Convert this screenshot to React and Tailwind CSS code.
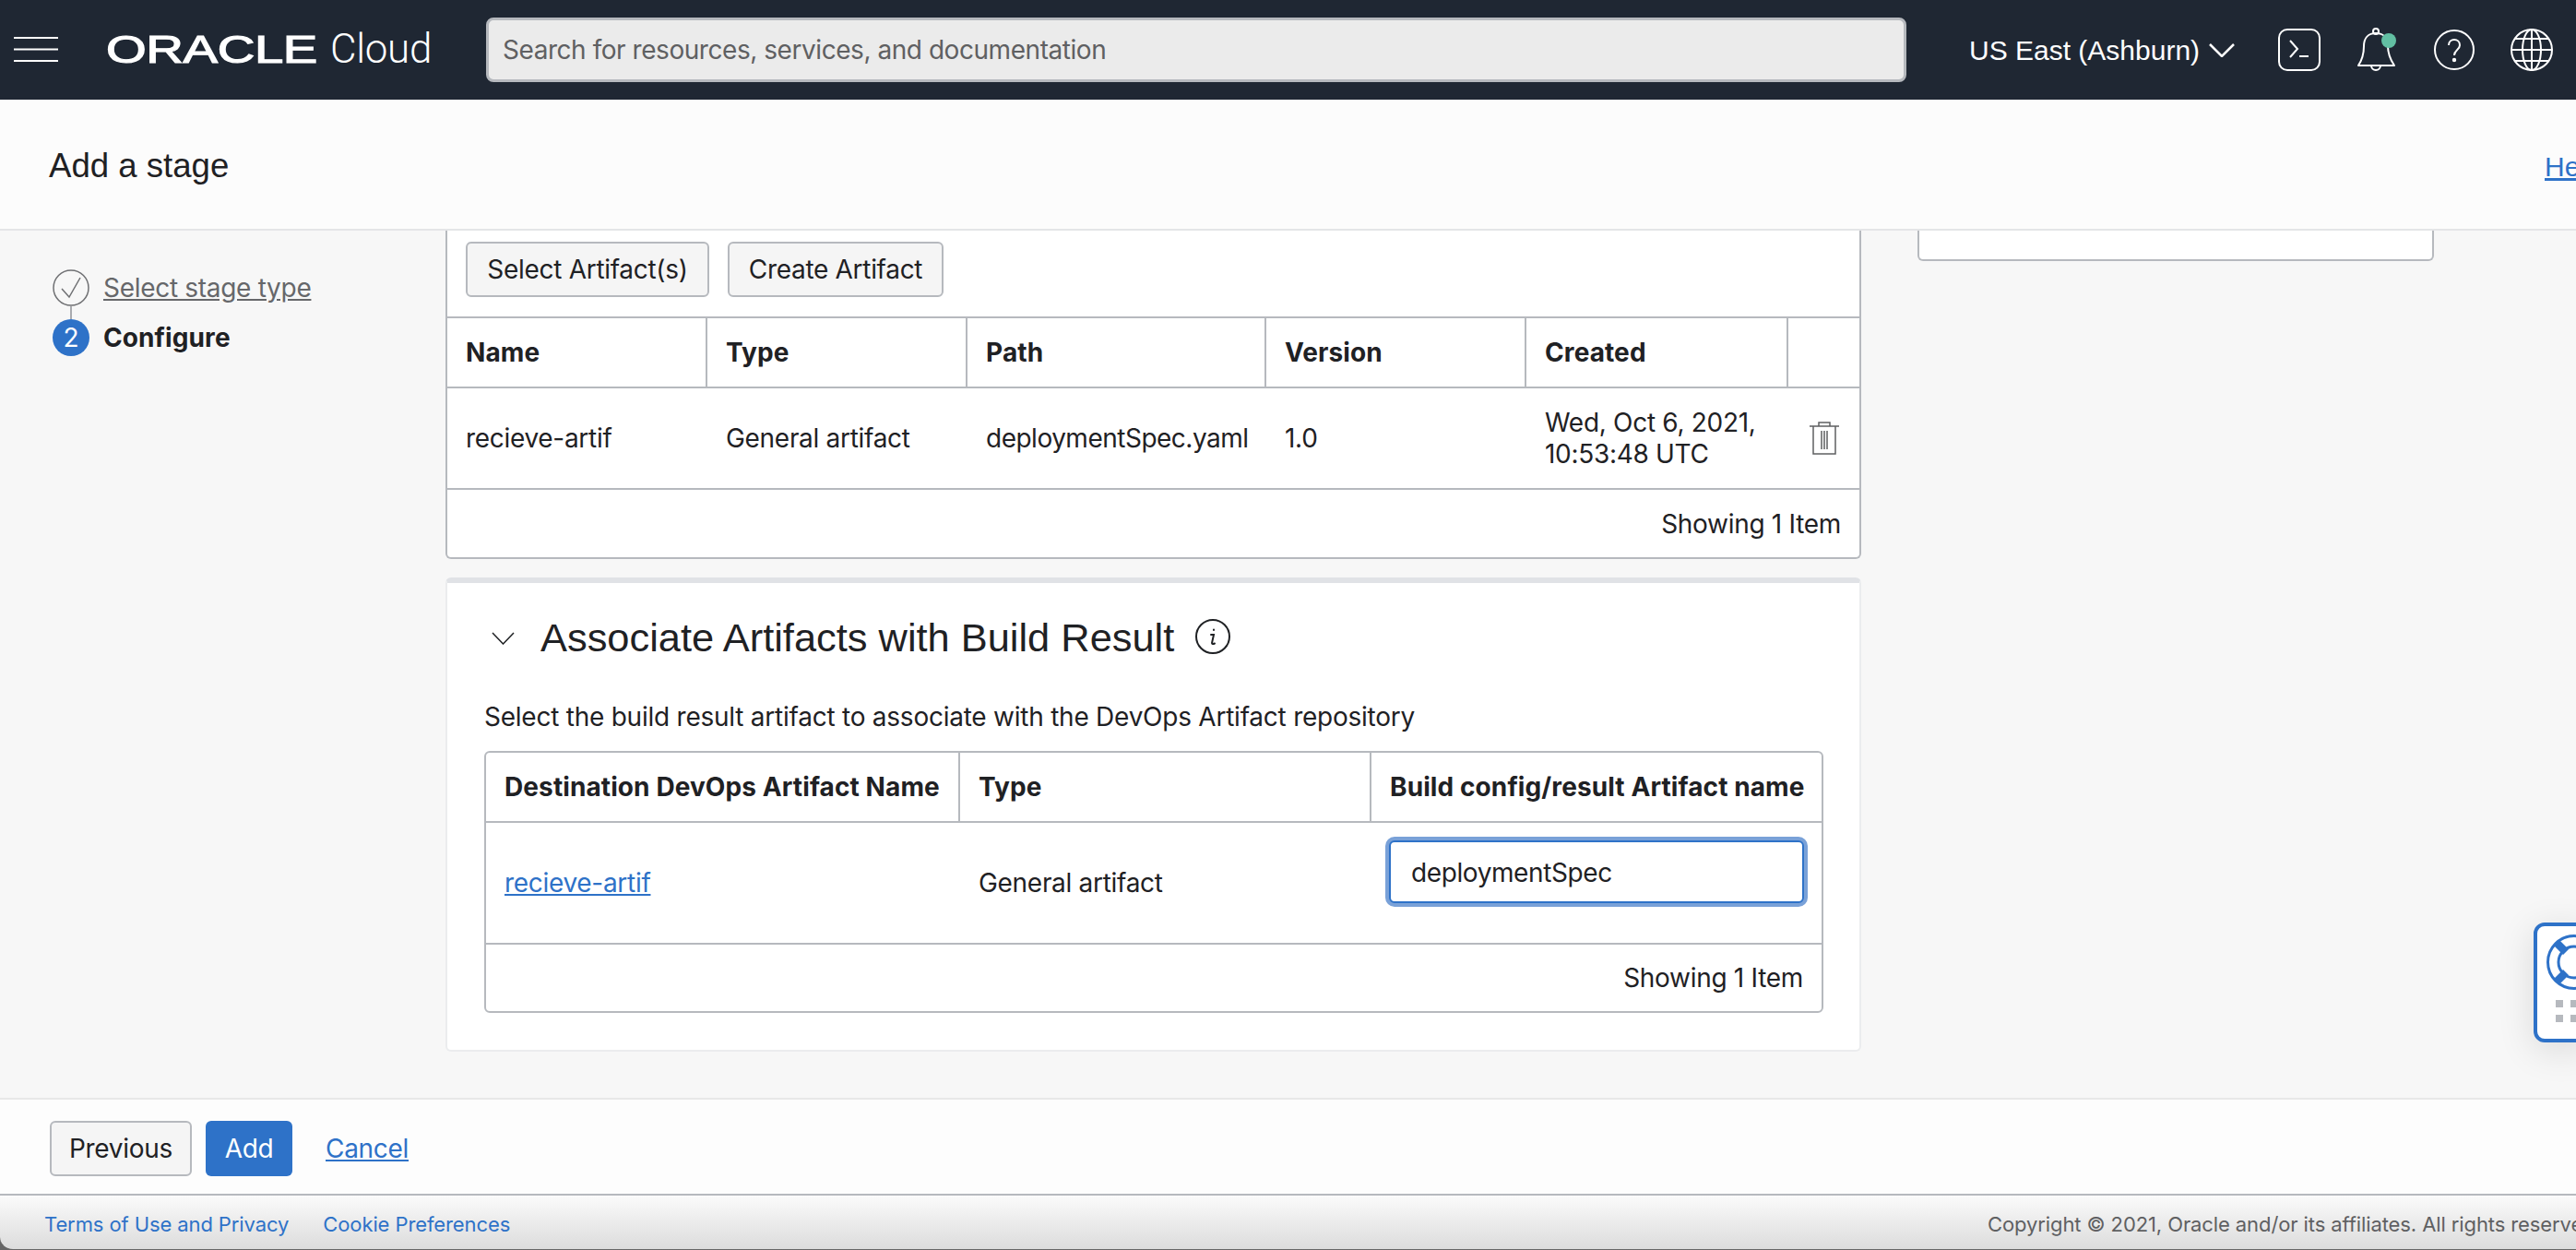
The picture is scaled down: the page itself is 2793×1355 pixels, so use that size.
import React from 'react'

const Hamburger = () => (
  <svg width="48" height="28" viewBox="0 0 48 28" fill="none" stroke="#fff" strokeWidth="2">
    <path d="M0 1h48M0 13.5h48M0 26h48" />
  </svg>
)

const Logo = () => (
  <svg width="354" height="40" viewBox="0 0 354 40" className="block overflow-visible">
    <text x="0" y="34" fontFamily="'Liberation Sans', sans-serif" fontSize="42" fill="#fff" stroke="#fff" strokeWidth="1.2" textLength="229" lengthAdjust="spacingAndGlyphs">ORACLE</text>
    <text x="243" y="34" fontFamily="Roboto, sans-serif" fontSize="44" fontWeight="300" fill="#fff" textLength="110" lengthAdjust="spacingAndGlyphs">Cloud</text>
  </svg>
)

const TerminalIcon = () => (
  <svg width="46" height="46" viewBox="0 0 46 46" fill="none" stroke="#fff" strokeWidth="2">
    <rect x="1" y="1" width="44" height="44" rx="9" />
    <path d="M13 13l8 9-8 9M23 30h10" />
  </svg>
)

const BellIcon = () => (
  <svg width="44" height="48" viewBox="0 0 44 48" fill="none" className="overflow-visible">
    <path d="M1 41c4-6 6-13 6-21 0-9 5-14 13-14s13 5 13 14c0 8 3 15 7 21z" stroke="#fff" strokeWidth="2" strokeLinejoin="round" />
    <circle cx="20" cy="4" r="3" stroke="#fff" strokeWidth="2" />
    <path d="M15 41a5 5 0 0 0 10 0" stroke="#fff" strokeWidth="2" />
    <ellipse cx="34" cy="14" rx="8" ry="8" fill="#62bfa3" />
  </svg>
)

const HelpIcon = () => (
  <svg width="44" height="44" viewBox="0 0 44 44" fill="none" stroke="#fff" strokeWidth="2">
    <circle cx="22" cy="22" r="21" />
    <path d="M16 17c0-4 3-6 6-6s6 2 6 6c0 5-6 5-6 11" />
    <circle cx="22" cy="33" r="1.2" fill="#fff" />
  </svg>
)

const GlobeIcon = () => (
  <svg width="46" height="46" viewBox="0 0 46 46" fill="none" stroke="#fff" strokeWidth="2">
    <circle cx="23" cy="23" r="22" />
    <ellipse cx="23" cy="23" rx="10" ry="22" />
    <path d="M23 1v44M1 23h44M5 11h36M5 35h36" />
  </svg>
)

const Chevron = ({ w, h, color, sw }) => (
  <svg width={w} height={h} viewBox={`0 0 ${w} ${h}`} fill="none" stroke={color} strokeWidth={sw}>
    <path d={`M1 1L${w / 2} ${h - 1}L${w - 1} 1`} />
  </svg>
)

const TrashIcon = () => (
  <svg width="32" height="36" viewBox="0 0 32 36" fill="none" stroke="#5f6062" strokeWidth="1.5">
    <path d="M0 5h32M10 5V1h12v4M4 5v30h24V5M13 10v20M16 10v20M19 10v20" />
  </svg>
)

const InfoIcon = () => (
  <svg width="38" height="38" viewBox="0 0 38 38" fill="none" stroke="#1f2124" strokeWidth="2">
    <circle cx="19" cy="19" r="18" />
    <path d="M20 11.5v.5M17 17h3l-2 9c0 1 1 1.5 3 .5" strokeLinecap="round" />
  </svg>
)

const CheckCircle = () => (
  <svg width="40" height="40" viewBox="0 0 40 40" fill="none" stroke="#6f7073" strokeWidth="1.5">
    <circle cx="20" cy="20" r="19" />
    <path d="M10 21l8 9 12-21" />
  </svg>
)

const Lifebuoy = () => (
  <svg width="60" height="60" viewBox="0 0 60 60" fill="none">
    <circle cx="30" cy="30" r="28.5" stroke="#2e72c8" strokeWidth="3" />
    <circle cx="30" cy="30" r="17" stroke="#2e72c8" strokeWidth="3" />
    <path d="M8 12l10 10 6-6L14 6zM8 48l10-10 6 6-10 10z" fill="#2e72c8" />
  </svg>
)

const cell = 'flex items-center px-5 border-[#b6b9be] whitespace-nowrap'

const App = () => {
  return (
    <div className="w-full h-[1355px] flex flex-col overflow-hidden bg-[#666] text-[#1f2124] font-['Inter',sans-serif] text-[28px] tracking-[-0.3px]">
      <header className="h-[108px] shrink-0 bg-[#1f2733] flex items-center">
        <div className="ml-[15px] mr-[52px]"><Hamburger /></div>
        <Logo />
        <div className="ml-[58px] w-[1540px] h-[70px] bg-[#ebebeb] border-[3px] border-[#b6b9be] rounded-lg flex items-center pl-[15px] text-[#5f6062] tracking-[-0.45px]">
          Search for resources, services, and documentation
        </div>
        <div className="ml-[68px] flex items-center text-white font-['Liberation_Sans',sans-serif] text-[30px] tracking-normal">
          US East (Ashburn)
          <span className="ml-[10px]"><Chevron w={28} h={15} color="#fff" sw={2.5} /></span>
        </div>
        <div className="ml-[47px]"><TerminalIcon /></div>
        <div className="ml-[40px]"><BellIcon /></div>
        <div className="ml-[39px]"><HelpIcon /></div>
        <div className="ml-[39px]"><GlobeIcon /></div>
      </header>

      <div className="h-[142px] shrink-0 bg-[#fcfcfc] border-b-2 border-[#e4e5e7] flex items-center justify-between pl-[53px] pt-[4px] font-['Liberation_Sans',sans-serif] tracking-normal">
        <h1 className="text-[36.6px]">Add a stage</h1>
        <a className="text-[#2e72c8] underline text-[30px] w-[34px] overflow-hidden">Help</a>
      </div>

      <div className="flex-1 min-h-0 flex bg-[#f7f7f7] overflow-hidden">
        <aside className="w-[483px] shrink-0 pt-[42px] pl-[57px]">
          <div className="flex items-center gap-[15px] h-[40px]">
            <CheckCircle />
            <a className="text-[#66676a] underline">Select stage type</a>
          </div>
          <div className="w-[2px] h-[14px] ml-[19px] bg-[#a9abaf]"></div>
          <div className="flex items-center gap-[15px] h-[40px]">
            <div className="w-[40px] h-[40px] rounded-full bg-[#2e72c8] text-white flex items-center justify-center">2</div>
            <span className="font-bold tracking-[0.1px]">Configure</span>
          </div>
        </aside>

        <main className="w-[1535px] shrink-0">
          <section className="h-[356px] bg-white border-x-2 border-b-2 border-[#b6b9be] rounded-b-md flex flex-col">
            <div className="h-[93px] shrink-0 pl-[20px] pt-[12px] flex items-start gap-[20px]">
              <button className="h-[60px] w-[264px] bg-[#f5f5f5] border-2 border-[#b6b9be] rounded-md">Select Artifact(s)</button>
              <button className="h-[60px] w-[234px] bg-[#f5f5f5] border-2 border-[#b6b9be] rounded-md">Create Artifact</button>
            </div>
            <div className="h-[78px] shrink-0 grid grid-cols-[282px_282px_324px_282px_284px_77px] border-y-2 border-[#b6b9be] font-bold tracking-[0.1px]">
              <div className={`${cell} border-r-2`}>Name</div>
              <div className={`${cell} border-r-2`}>Type</div>
              <div className={`${cell} border-r-2`}>Path</div>
              <div className={`${cell} border-r-2`}>Version</div>
              <div className={`${cell} border-r-2`}>Created</div>
              <div></div>
            </div>
            <div className="h-[110px] shrink-0 grid grid-cols-[282px_282px_324px_282px_284px_77px] border-b-2 border-[#b6b9be]">
              <div className={cell}>recieve-artif</div>
              <div className={cell}>General artifact</div>
              <div className={`${cell} tracking-[-0.5px]`}>deploymentSpec.yaml</div>
              <div className={cell}>1.0</div>
              <div className="flex items-center px-5 leading-[34px]">Wed, Oct 6, 2021, 10:53:48 UTC</div>
              <div className="flex items-center justify-center"><TrashIcon /></div>
            </div>
            <div className="flex-1 flex items-center justify-end pr-[20px]">Showing 1 Item</div>
          </section>

          <section className="mt-[20px] h-[514px] bg-white border-t-[6px] border-x-2 border-b-2 border-t-[#e0e2e6] border-x-[#ebecee] border-b-[#ebecee] rounded-md pl-[40px]">
            <div className="h-[128px] flex items-start pt-[35px]">
              <span className="ml-[8px] mt-[18px]"><Chevron w={25} h={14} color="#1f2124" sw={1.5} /></span>
              <h2 className="ml-[28px] font-['Liberation_Sans',sans-serif] text-[43.4px] leading-[48px] tracking-normal">Associate Artifacts with Build Result</h2>
              <span className="ml-[23px] mt-[4px]"><InfoIcon /></span>
            </div>
            <p className="leading-[34px] tracking-[-0.24px]">Select the build result artifact to associate with the DevOps Artifact repository</p>
            <div className="mt-[20px] w-[1452px] h-[284px] border-2 border-[#b6b9be] rounded-md flex flex-col">
              <div className="h-[76px] shrink-0 grid grid-cols-[514px_446px_488px] border-b-2 border-[#b6b9be] font-bold tracking-[0.1px]">
                <div className={`${cell} border-r-2`}>Destination DevOps Artifact Name</div>
                <div className={`${cell} border-r-2`}>Type</div>
                <div className={cell}>Build config/result Artifact name</div>
              </div>
              <div className="h-[132px] shrink-0 grid grid-cols-[514px_446px_488px] border-b-2 border-[#b6b9be]">
                <div className={cell}><a className="text-[#2e72c8] underline">recieve-artif</a></div>
                <div className={cell}>General artifact</div>
                <div className="pl-[19px] pt-[19px]">
                  <input readOnly value="deploymentSpec" className="w-[450px] h-[68px] pl-[22px] pt-[2px] bg-white border-2 border-[#2e72c8] rounded-md ring-4 ring-[#79a1d8] outline-none tracking-[-0.4px]" />
                </div>
              </div>
              <div className="flex-1 flex items-center justify-end pr-[20px]">Showing 1 Item</div>
            </div>
          </section>
        </main>

        <div className="ml-[61px] w-[560px] h-[33px] shrink-0 bg-white border-x-2 border-b-2 border-[#b6b9be] rounded-b-md"></div>
      </div>

      <div className="h-[106px] shrink-0 bg-[#fdfdfd] border-t-2 border-b-2 border-t-[#e8e8e8] border-b-[#b6b9be] flex items-center pl-[54px] pt-[4px]">
        <button className="h-[60px] w-[154px] bg-[#f5f5f5] border-2 border-[#b6b9be] rounded-md">Previous</button>
        <button className="ml-[15px] h-[60px] w-[94px] bg-[#2e72c8] text-white rounded-md">Add</button>
        <a className="ml-[36px] text-[#2e72c8] underline">Cancel</a>
      </div>

      <footer className="h-[59px] shrink-0 flex items-center justify-between pl-[48px] pt-[4px] rounded-bl-[14px] border-b border-[#666] bg-gradient-to-b from-[#fbfbfb] to-[#dcdcdc] text-[22px] tracking-[-0.1px]">
        <div className="flex gap-[37px] text-[#2e72c8]">
          <a>Terms of Use and Privacy</a>
          <a>Cookie Preferences</a>
        </div>
        <div className="w-[638px] overflow-hidden whitespace-nowrap text-[#5f6062]">Copyright © 2021, Oracle and/or its affiliates. All rights reserved.</div>
      </footer>

      <div className="absolute left-[2747px] top-[1000px] w-[60px] h-[130px] bg-white border-4 border-[#2e72c8] rounded-xl shadow-[0_8px_40px_rgba(0,0,0,0.12)] overflow-hidden">
        <div className="ml-[10px] mt-[9px]"><Lifebuoy /></div>
        <div className="ml-[20px] mt-[11px] grid grid-cols-[8px_8px] gap-x-[8px] gap-y-[8px]">
          <span className="h-[8px] bg-[#b6b9be]"></span>
          <span className="h-[8px] bg-[#b6b9be]"></span>
          <span className="h-[8px] bg-[#b6b9be]"></span>
          <span className="h-[8px] bg-[#b6b9be]"></span>
        </div>
      </div>
    </div>
  )
}

export default App
